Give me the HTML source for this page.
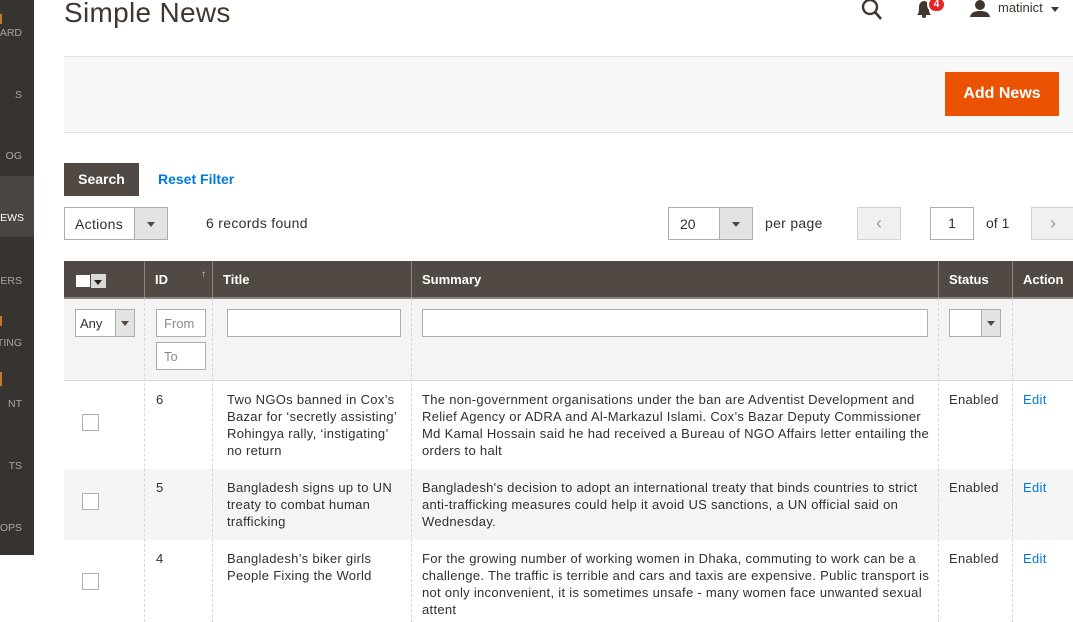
<!DOCTYPE html>
<html><head><meta charset="utf-8"><style>
*{box-sizing:border-box;margin:0;padding:0}
body{width:1073px;height:622px;overflow:hidden;background:#fff;font-family:"Liberation Sans",sans-serif;color:#303030;position:relative;font-size:13px}
.a{position:absolute}
.side{left:0;top:0;width:34px;height:555px;background:#373330}
.si{position:absolute;left:0;width:34px;color:#aaa6a0;font-size:10.5px;text-align:right;padding-right:12px;white-space:nowrap;overflow:hidden;direction:rtl}
.ico{position:absolute;left:0;width:2px;height:10px;background:#c07a30}
.sel{position:absolute;border:1px solid #adadad;background:#fff}
.sel .ar{position:absolute;right:0;top:0;bottom:0;border-left:1px solid #adadad;background:#e3e3e3}
.sel .ar:after{content:"";position:absolute;left:50%;top:50%;margin:-2px 0 0 -4px;border:4px solid transparent;border-top:5px solid #514943;border-bottom:0}
.inp{position:absolute;border:1px solid #adadad;background:#fff;height:28px;color:#8a8a8a;padding:6px 7px;font-size:13px}
.th{position:absolute;top:261px;height:37px;background:#514943;color:#fff;font-weight:bold;font-size:13px;padding:11px 10px;border-left:1px solid #8a837f}
.vl{position:absolute;top:298px;height:324px;border-left:1px dashed #d6d6d6}
.c{position:absolute;font-size:13px;line-height:17px;color:#303030;letter-spacing:0.3px;white-space:nowrap}
.cb{position:absolute;left:82px;width:17px;height:17px;border:1px solid #adadad;background:#fff;border-radius:1px}
.edit{color:#007bdb}
</style></head><body>
<div class="a side">
 <div class="ico" style="top:14px"></div><div class="si" style="top:27px">ARD</div>
 <div class="si" style="top:89px">S</div>
 <div class="si" style="top:150px">OG</div>
 <div style="position:absolute;top:176px;left:0;width:34px;height:61px;background:#4a4542"></div>
 <div class="si" style="top:212px;color:#fff;padding-right:10px">NEWS</div>
 <div class="si" style="top:275px">IERS</div>
 <div class="ico" style="top:316px"></div><div class="si" style="top:337px">TING</div>
 <div class="ico" style="top:372px;height:14px"></div><div class="si" style="top:398px">NT</div>
 <div class="si" style="top:460px">TS</div>
 <div class="si" style="top:522px">OPS</div>
</div>
<div class="a" style="left:64px;top:-3px;font-size:28px;color:#41362f;letter-spacing:0.3px">Simple News</div>
<svg class="a" style="left:861px;top:0" width="22" height="20" viewBox="0 0 22 20"><circle cx="9" cy="7" r="7" fill="none" stroke="#41362f" stroke-width="2.4"/><path d="M14 12l6 7" stroke="#41362f" stroke-width="2.6"/></svg>
<svg class="a" style="left:915px;top:0" width="18" height="18" viewBox="0 0 18 18"><path d="M2 15c2-2 2-4 2-8 0-3 2-6 5-6s5 3 5 6c0 4 0 6 2 8z" fill="#41362f"/><circle cx="9" cy="16" r="2" fill="#41362f"/></svg>
<div class="a" style="left:927px;top:-4px;width:19px;height:17px;border-radius:9px;background:#e22626;color:#fff;font-size:10px;font-weight:bold;text-align:center;line-height:13px;border:2px solid #fff">4</div>
<svg class="a" style="left:970px;top:0" width="20" height="17" viewBox="0 0 20 17"><circle cx="10" cy="5" r="5" fill="#41362f"/><path d="M0 17c1-5 5-6 10-6s9 1 10 6z" fill="#41362f"/></svg>
<div class="a" style="left:998px;top:0;font-size:13px;color:#41362f">matinict</div>
<div class="a" style="left:1051px;top:7px;border:4px solid transparent;border-top:5px solid #41362f"></div>
<div class="a" style="left:64px;top:56px;width:1009px;height:77px;background:#f8f8f8;border-top:1px solid #e3e3e3;border-bottom:1px solid #e3e3e3"></div>
<div class="a" style="left:945px;top:72px;width:114px;height:44px;background:#eb5202;color:#fff;font-size:16px;font-weight:bold;text-align:center;line-height:44px">Add News</div>
<div class="a" style="left:64px;top:163px;width:75px;height:33px;background:#514943;color:#fff;font-weight:bold;font-size:14px;text-align:center;line-height:33px">Search</div>
<div class="a" style="left:158px;top:171px;color:#007bdb;font-weight:bold;font-size:14px">Reset Filter</div>
<div class="sel" style="left:64px;top:207px;width:104px;height:33px"><span style="position:absolute;left:10px;top:8px;font-size:14px;letter-spacing:0.3px">Actions</span><div class="ar" style="width:33px"></div></div>
<div class="a" style="left:206px;top:215px;font-size:14px;letter-spacing:0.3px">6 records found</div>
<div class="sel" style="left:668px;top:207px;width:85px;height:33px"><span style="position:absolute;left:11px;top:8px;font-size:14px">20</span><div class="ar" style="width:33px"></div></div>
<div class="a" style="left:765px;top:215px;font-size:14px;letter-spacing:0.3px">per page</div>
<div class="a" style="left:857px;top:207px;width:44px;height:33px;background:#f0f0f0;border:1px solid #d1d1d1;color:#999;text-align:center;line-height:30px;font-size:18px">‹</div>
<div class="a" style="left:930px;top:207px;width:44px;height:33px;border:1px solid #adadad;text-align:center;line-height:31px;font-size:14px">1</div>
<div class="a" style="left:986px;top:215px;font-size:14px">of 1</div>
<div class="a" style="left:1031px;top:207px;width:44px;height:33px;background:#f0f0f0;border:1px solid #d1d1d1;color:#999;text-align:center;line-height:30px;font-size:18px">›</div>
<div class="th" style="left:64px;width:80px;border-left:0"><div style="position:absolute;left:11px;top:13px;width:32px;height:14px;background:#fff;border:1px solid #514943"></div><div style="position:absolute;left:26px;top:13px;width:16px;height:14px;background:#d9d9d9;border-left:1px solid #514943"></div><div style="position:absolute;left:30px;top:19px;border:4px solid transparent;border-top:5px solid #222"></div></div>
<div class="th" style="left:144px;width:68px">ID<span style="position:absolute;right:6px;top:8px;font-size:10px;font-weight:normal;color:#ddd">↑</span></div>
<div class="th" style="left:212px;width:199px">Title</div>
<div class="th" style="left:411px;width:527px">Summary</div>
<div class="th" style="left:938px;width:74px">Status</div>
<div class="th" style="left:1012px;width:61px">Action</div>
<div class="a" style="left:64px;top:297px;width:1009px;height:2px;background:#8a837f"></div>
<div class="a" style="left:64px;top:299px;width:1009px;height:82px;background:#f4f4f4;border-bottom:1px solid #d6d6d6"></div>
<div class="a" style="left:64px;top:469px;width:1009px;height:71px;background:#f5f5f5"></div>
<div class="vl" style="left:144px"></div><div class="vl" style="left:212px"></div><div class="vl" style="left:411px"></div><div class="vl" style="left:938px"></div><div class="vl" style="left:1012px"></div>
<div class="sel" style="left:75px;top:309px;width:60px;height:28px"><span style="position:absolute;left:4px;top:6px;font-size:13px">Any</span><div class="ar" style="width:19px"></div></div>
<div class="inp" style="left:156px;top:309px;width:50px">From</div>
<div class="inp" style="left:156px;top:342px;width:50px">To</div>
<div class="inp" style="left:227px;top:309px;width:174px"></div>
<div class="inp" style="left:422px;top:309px;width:506px"></div>
<div class="sel" style="left:949px;top:309px;width:52px;height:28px"><div class="ar" style="width:19px"></div></div>
<div class="cb" style="top:414px"></div>
<div class="c" style="left:156px;top:391px">6</div>
<div class="c" style="left:227px;top:391px">Two NGOs banned in Cox’s<br>Bazar for ‘secretly assisting’<br>Rohingya rally, ‘instigating’<br>no return</div>
<div class="c" style="left:422px;top:391px">The non-government organisations under the ban are Adventist Development and<br>Relief Agency or ADRA and Al-Markazul Islami. Cox’s Bazar Deputy Commissioner<br>Md Kamal Hossain said he had received a Bureau of NGO Affairs letter entailing the<br>orders to halt</div>
<div class="c" style="left:949px;top:391px">Enabled</div><div class="c edit" style="left:1023px;top:391px">Edit</div>
<div class="cb" style="top:493px"></div>
<div class="c" style="left:156px;top:479px">5</div>
<div class="c" style="left:227px;top:479px">Bangladesh signs up to UN<br>treaty to combat human<br>trafficking</div>
<div class="c" style="left:422px;top:479px">Bangladesh's decision to adopt an international treaty that binds countries to strict<br>anti-trafficking measures could help it avoid US sanctions, a UN official said on<br>Wednesday.</div>
<div class="c" style="left:949px;top:479px">Enabled</div><div class="c edit" style="left:1023px;top:479px">Edit</div>
<div class="cb" style="top:573px"></div>
<div class="c" style="left:156px;top:550px">4</div>
<div class="c" style="left:227px;top:550px">Bangladesh’s biker girls<br>People Fixing the World</div>
<div class="c" style="left:422px;top:550px">For the growing number of working women in Dhaka, commuting to work can be a<br>challenge. The traffic is terrible and cars and taxis are expensive. Public transport is<br>not only inconvenient, it is sometimes unsafe - many women face unwanted sexual<br>attent</div>
<div class="c" style="left:949px;top:550px">Enabled</div><div class="c edit" style="left:1023px;top:550px">Edit</div>
</body></html>
